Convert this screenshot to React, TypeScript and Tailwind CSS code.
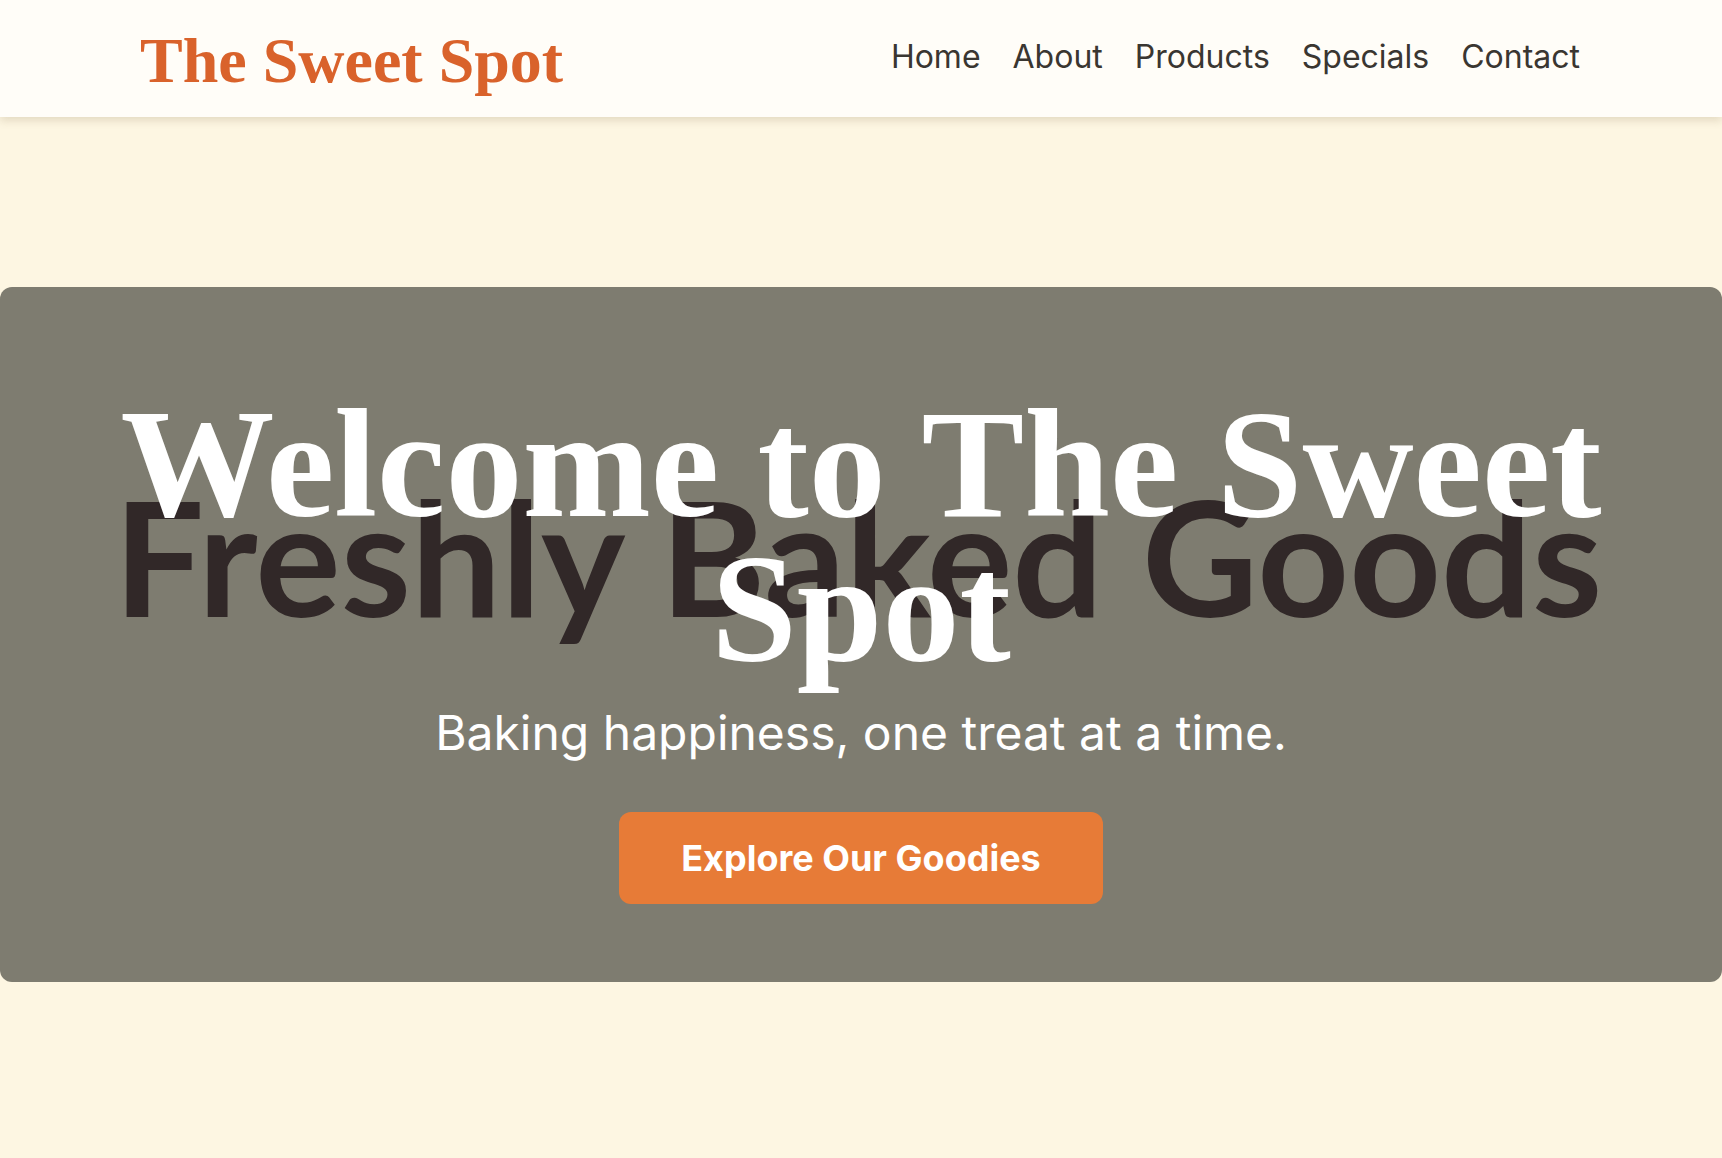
const NAV = ['Home', 'About', 'Products', 'Specials', 'Contact'];

export default function App() {
  return (
    <div className="min-h-screen bg-[#fdf6e2] font-['Inter','Liberation_Sans',sans-serif]">
      <header className="relative z-10 bg-[#fffdf8] shadow-[0_4px_8px_rgba(120,100,60,0.18)]">
        <div className="flex h-[117px] items-center justify-between pl-[140px] pr-[142px]">
          <a className="pt-[4px] font-['Liberation_Serif',serif] text-[64px] font-bold leading-none text-[#d9622b]">
            The Sweet Spot
          </a>
          <nav className="flex items-center gap-[32px] pb-[4px]">
            {NAV.map(n => (
              <a key={n} className="text-[32px] leading-none text-[#3a3631]">
                {n}
              </a>
            ))}
          </nav>
        </div>
      </header>

      <main className="pt-[170px] pb-[175px]">
        <section className="relative overflow-hidden rounded-[12px] bg-[#7e7c70] px-[100px] pt-[105px] pb-[78px] text-center">
          <div className="absolute inset-x-0 top-[188px] pr-[6px] font-['Lato',sans-serif] text-[160px] font-bold leading-none text-[#312828]">
            Freshly Baked Goods
          </div>
          <h1 className="relative font-['Liberation_Serif',serif] text-[154px] font-bold leading-[144px] text-white">
            Welcome to The Sweet Spot
          </h1>
          <p className="relative mt-[17px] text-[48px] leading-[72px] text-white">
            Baking happiness, one treat at a time.
          </p>
          <button className="relative mt-[43px] rounded-[12px] bg-[#e77b37] px-[62px] py-[24px] text-[36px] font-bold leading-[44px] text-white">
            Explore Our Goodies
          </button>
        </section>
      </main>
    </div>
  );
}
